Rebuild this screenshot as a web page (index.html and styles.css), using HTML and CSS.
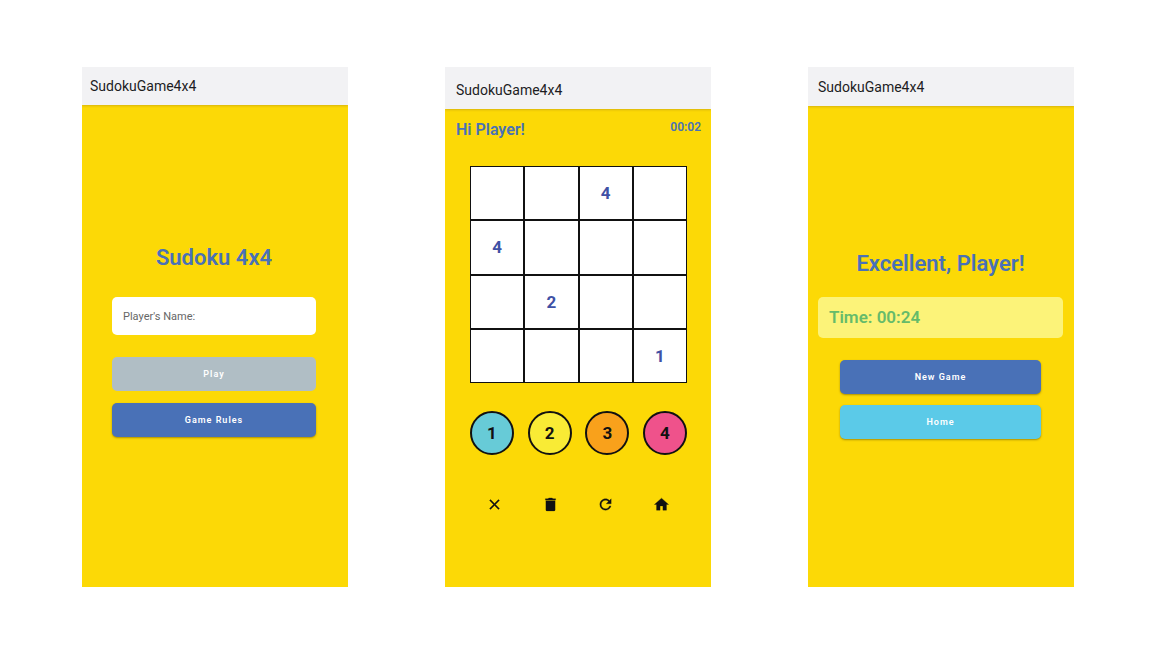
FILE: index.html
```html
<!DOCTYPE html>
<html lang="en">
<head>
<meta charset="utf-8">
<meta name="viewport" content="width=device-width, initial-scale=1">
<title>SudokuGame4x4</title>
<link rel="stylesheet" href="styles.css">
</head>
<body>
<main class="screens">
  <section class="phone start">
    <header class="bar">SudokuGame4x4</header>
    <form class="content">
      <h1 class="title">Sudoku 4x4</h1>
      <input class="name" type="text" placeholder="Player's Name:" aria-label="Player's Name">
      <button class="btn muted" type="button">Play</button>
      <button class="btn blue" type="button">Game Rules</button>
    </form>
  </section>

  <section class="phone game">
    <header class="bar">SudokuGame4x4</header>
    <div class="content">
      <div class="status">
        <h2 class="greeting">Hi Player!</h2>
        <time class="timer">00:02</time>
      </div>
      <div class="board">
        <span class="cell"></span><span class="cell"></span><span class="cell">4</span><span class="cell"></span>
        <span class="cell">4</span><span class="cell"></span><span class="cell"></span><span class="cell"></span>
        <span class="cell"></span><span class="cell">2</span><span class="cell"></span><span class="cell"></span>
        <span class="cell"></span><span class="cell"></span><span class="cell"></span><span class="cell">1</span>
      </div>
      <div class="digits">
        <button class="digit cyan" type="button">1</button>
        <button class="digit yellow" type="button">2</button>
        <button class="digit orange" type="button">3</button>
        <button class="digit pink" type="button">4</button>
      </div>
      <div class="tools">
        <button class="tool" type="button" aria-label="Clear cell"><svg viewBox="0 0 24 24"><path d="M19 6.41 17.59 5 12 10.59 6.41 5 5 6.41 10.59 12 5 17.59 6.41 19 12 13.41 17.59 19 19 17.59 13.41 12z"/></svg></button>
        <button class="tool" type="button" aria-label="Delete all"><svg viewBox="0 0 24 24"><path d="M5.500 6.600v13c0 .9.700 1.400 1.600 1.400h9.800c.9 0 1.600-.5 1.600-1.400v-13zM19.200 3.800h-3.700l-1-1h-5l-1 1H4.800v2h14.400z"/></svg></button>
        <button class="tool" type="button" aria-label="Restart"><svg viewBox="0 0 24 24"><path d="M17.650 6.350C16.200 4.900 14.210 4 12 4c-4.420 0-7.990 3.580-7.990 8s3.570 8 7.990 8c3.730 0 6.840-2.550 7.730-6h-2.080c-.82 2.330-3.040 4-5.650 4-3.310 0-6-2.690-6-6s2.690-6 6-6c1.660 0 3.140.69 4.220 1.780L13 11h7V4z"/></svg></button>
        <button class="tool" type="button" aria-label="Home"><svg viewBox="0 0 24 24"><path d="M10 20v-6h4v6h5v-8h3L12 3 2 12h3v8z"/></svg></button>
      </div>
    </div>
  </section>

  <section class="phone result">
    <header class="bar">SudokuGame4x4</header>
    <div class="content">
      <h2 class="title">Excellent, Player!</h2>
      <p class="score">Time: 00:24</p>
      <div class="actions">
        <button class="btn blue" type="button">New Game</button>
        <button class="btn sky" type="button">Home</button>
      </div>
    </div>
  </section>
</main>
</body>
</html>
```
FILE: styles.css
```css
* {
  box-sizing: border-box;
}

body {
  margin: 0;
  background: #fff;
  font-family: Roboto, "Liberation Sans", sans-serif;
}

button,
input {
  font-family: inherit;
  border: 0;
}

button {
  padding: 0;
  cursor: pointer;
}

.screens {
  display: grid;
  grid-template-columns: repeat(3, 1fr);
  gap: 97px;
  min-height: 100vh;
  padding: 67px 76px 63px 82px;
}

.phone {
  display: flex;
  flex-direction: column;
  overflow: hidden;
  background: #fcd906;
}

.bar {
  padding: 10px 8px;
  background: #f2f2f4;
  box-shadow: 0 1px 2px rgba(150, 110, 30, 0.35);
  color: #1d1d1f;
  font-size: 14px;
  line-height: 18px;
}

.game .bar {
  padding: 14px 11px 10px;
}

.result .bar {
  padding: 11px 10px 10px;
}

.content {
  display: flex;
  flex-direction: column;
}

.title {
  margin: 0;
  color: #4971b7;
  font-size: 22px;
  font-weight: 600;
  line-height: 30px;
  text-align: center;
}

.start .content {
  padding: 138px 32px 20px 30px;
}

.name {
  width: 100%;
  height: 38px;
  margin: 24px 0 22px;
  padding: 0 11px;
  border-radius: 5px;
  background: #fff;
  color: #222;
  font-size: 11px;
}

.name::placeholder {
  color: #666;
  opacity: 1;
}

.btn {
  height: 34px;
  border-radius: 5px;
  color: #fff;
  font-size: 9px;
  font-weight: 600;
  letter-spacing: 1px;
}

.btn + .btn {
  margin-top: 12px;
}

.muted {
  background: #b0bec5;
}

.blue {
  background: #4971b7;
  box-shadow: 0 1px 2px rgba(90, 70, 0, 0.5);
}

.sky {
  background: #5bcae8;
  box-shadow: 0 1px 2px rgba(90, 70, 0, 0.5);
}

.status {
  display: flex;
  justify-content: space-between;
  padding: 10px 10px 0 11px;
}

.greeting {
  margin: 0;
  color: #4971b7;
  font-size: 16px;
  font-weight: 600;
  line-height: 22px;
}

.timer {
  color: #4971b7;
  font-size: 12px;
  font-weight: 600;
  line-height: 16px;
}

.board {
  display: grid;
  grid-template-columns: repeat(4, 1fr);
  margin: 25px 24px 28px 25px;
}

.cell {
  display: flex;
  align-items: center;
  justify-content: center;
  aspect-ratio: 1;
  border: 1px solid #111;
  background: #fff;
  color: #3f51a5;
  font-size: 17px;
  font-weight: 700;
}

.digits {
  display: flex;
  justify-content: space-between;
  padding: 0 24px 0 25px;
}

.digit {
  width: 44px;
  height: 44px;
  border: 2px solid #111;
  border-radius: 50%;
  color: #111;
  font-size: 17px;
  font-weight: 700;
}

.cyan {
  background: #67cbd7;
}

.yellow {
  background: #f9eb35;
}

.orange {
  background: #f9a11b;
}

.pink {
  background: #ef528b;
}

.tools {
  display: grid;
  grid-template-columns: repeat(4, 1fr);
  justify-items: center;
  padding: 41px 22px 20px;
}

.tool {
  display: flex;
  background: none;
}

.tool svg {
  width: 17px;
  height: 17px;
  fill: #111;
  stroke: #111;
  stroke-width: 0.4;
}

.result .content {
  padding: 143px 11px 20px 10px;
}

.score {
  margin: 18px 0 22px;
  padding: 10px 11px;
  border-radius: 5px;
  background: #fcf379;
  color: #66bb6a;
  font-size: 17px;
  font-weight: 600;
  line-height: 21px;
}

.actions {
  display: flex;
  flex-direction: column;
  padding: 0 22px;
}

.actions .btn + .btn {
  margin-top: 11px;
}
```
